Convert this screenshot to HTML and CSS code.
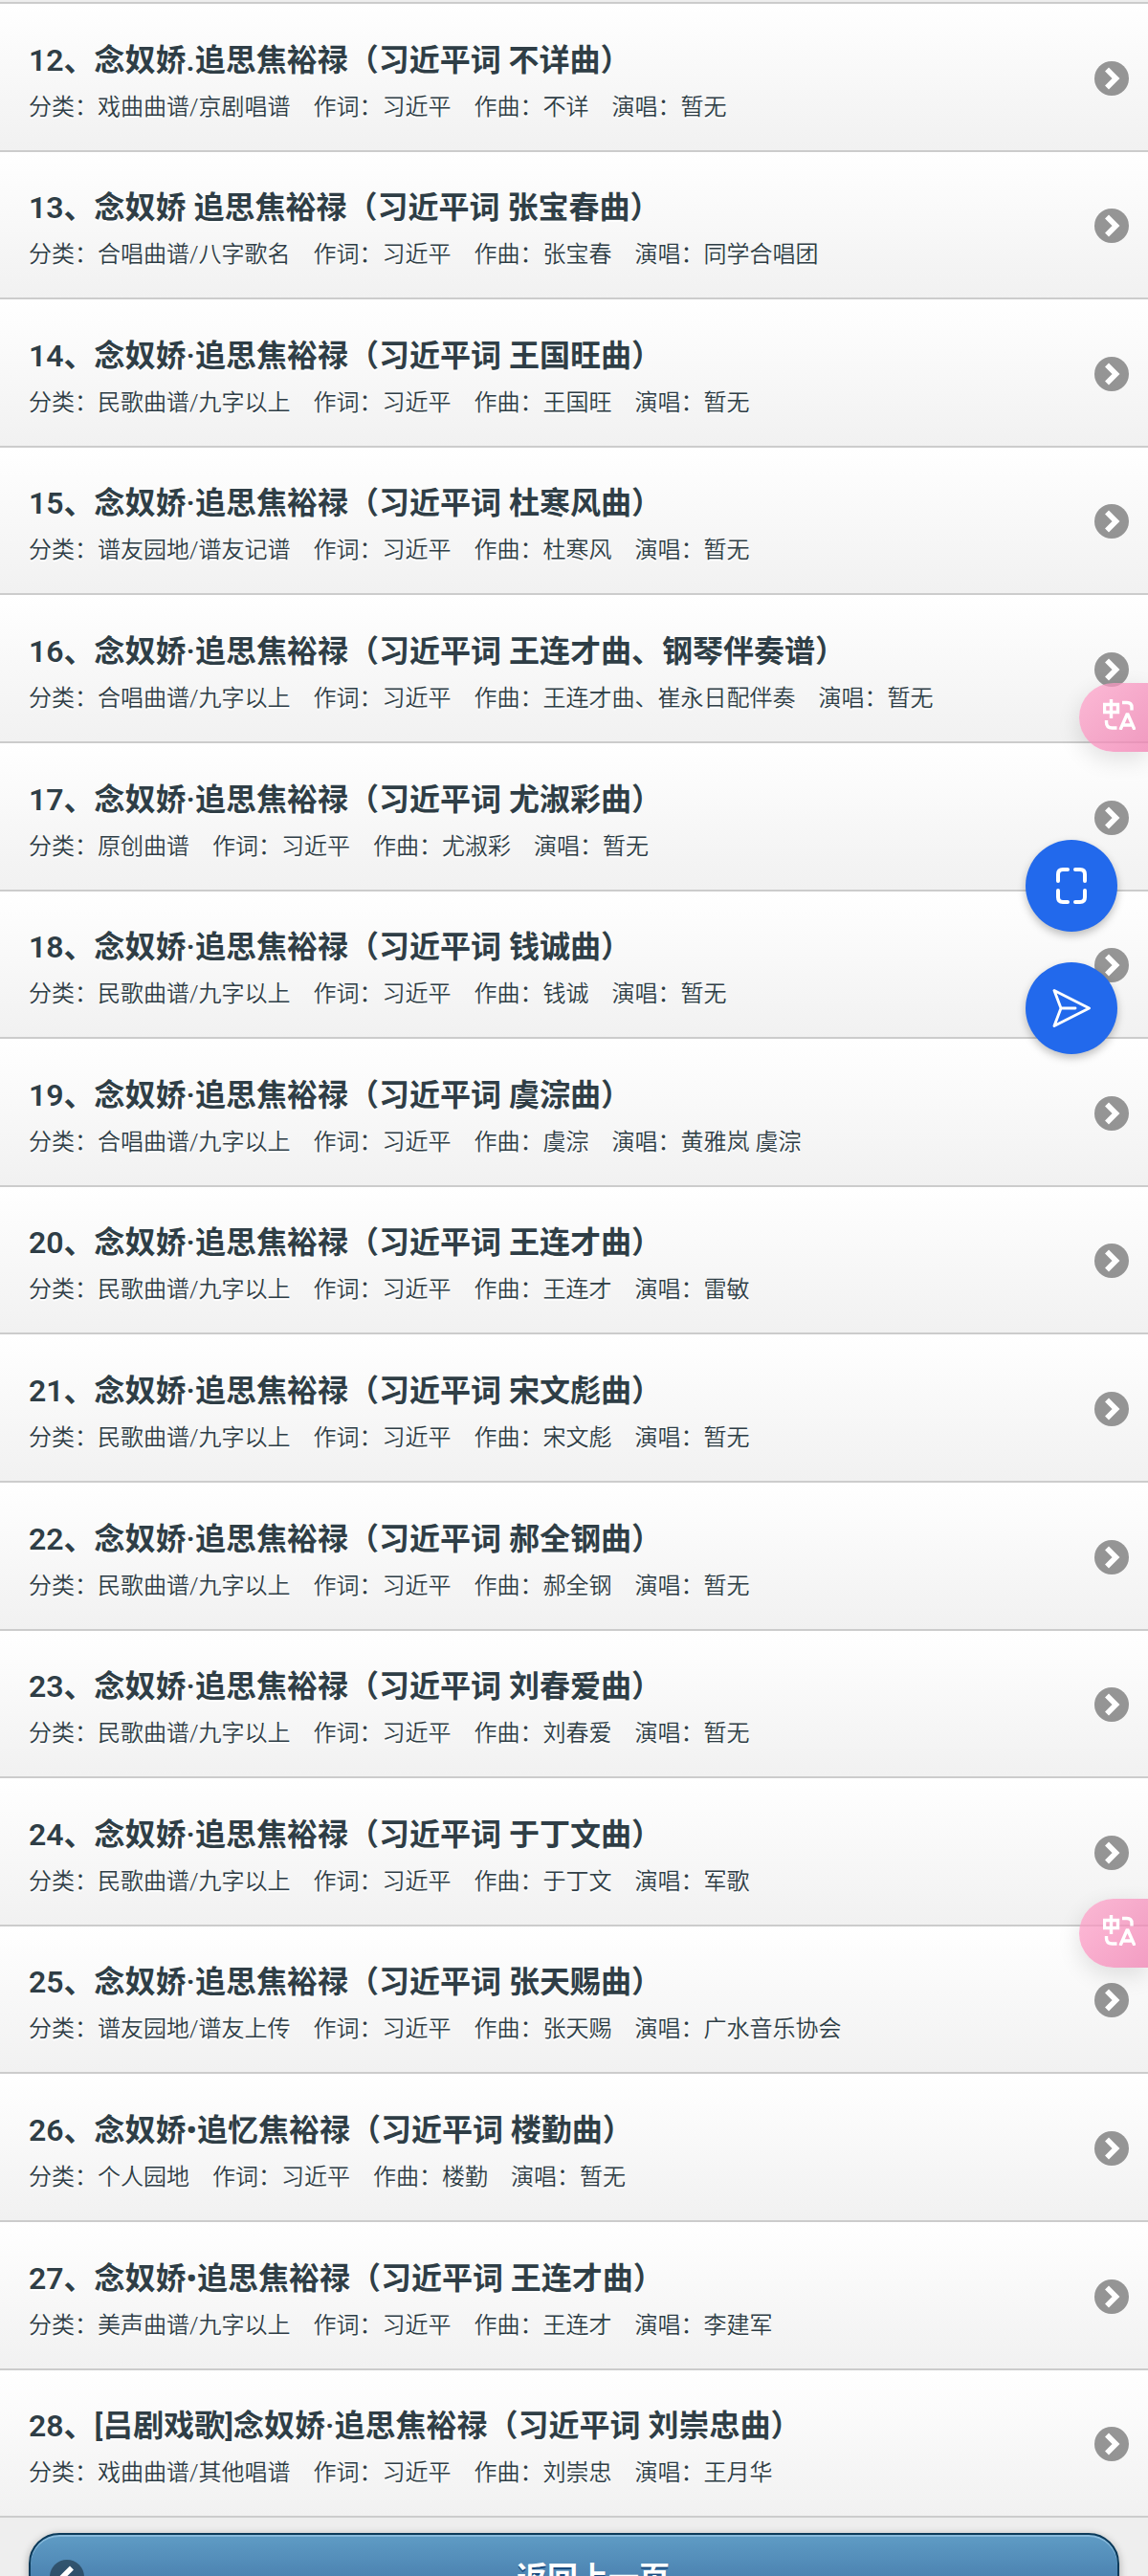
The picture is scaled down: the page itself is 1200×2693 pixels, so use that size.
FILE: index.html
```html
<!DOCTYPE html>
<html lang="zh-CN">
<head>
  <meta charset="utf-8">
  <title>曲谱列表</title>
  <link rel="stylesheet" href="styles.css">
</head>
<body>
  <svg class="symbols">
    <symbol id="arrow" viewBox="0 0 36 36">
      <circle cx="18" cy="18" r="18" fill="#000" fill-opacity=".4"/>
      <path d="M15 10.5l7.5 7.5-7.5 7.5" fill="none" stroke="#fff" stroke-width="5.6" stroke-linecap="square" stroke-linejoin="miter"/>
    </symbol>
    <symbol id="translate" viewBox="0 0 34 32">
      <g fill="none" stroke="#fff" stroke-width="3.4">
        <path d="M1.5 5.5h14v8h-14zM8.5 0v20M20 3.5h5q5 0 5 5v3M3.5 22v2q0 6 6 6h5"/>
        <path d="M18 32l7-16h1l7 16M20.5 27h10"/>
      </g>
    </symbol>
  </svg>

  <ul class="list">
    <li><a href="#"><h2>12、念奴娇.追思焦裕禄（习近平词 不详曲）</h2><p>分类：戏曲曲谱/京剧唱谱　作词：习近平　作曲：不详　演唱：暂无</p></a><svg class="arrow"><use href="#arrow"/></svg></li>
    <li><a href="#"><h2>13、念奴娇 追思焦裕禄（习近平词 张宝春曲）</h2><p>分类：合唱曲谱/八字歌名　作词：习近平　作曲：张宝春　演唱：同学合唱团</p></a><svg class="arrow"><use href="#arrow"/></svg></li>
    <li><a href="#"><h2>14、念奴娇·追思焦裕禄（习近平词 王国旺曲）</h2><p>分类：民歌曲谱/九字以上　作词：习近平　作曲：王国旺　演唱：暂无</p></a><svg class="arrow"><use href="#arrow"/></svg></li>
    <li><a href="#"><h2>15、念奴娇·追思焦裕禄（习近平词 杜寒风曲）</h2><p>分类：谱友园地/谱友记谱　作词：习近平　作曲：杜寒风　演唱：暂无</p></a><svg class="arrow"><use href="#arrow"/></svg></li>
    <li><a href="#"><h2>16、念奴娇·追思焦裕禄（习近平词 王连才曲、钢琴伴奏谱）</h2><p>分类：合唱曲谱/九字以上　作词：习近平　作曲：王连才曲、崔永日配伴奏　演唱：暂无</p></a><svg class="arrow"><use href="#arrow"/></svg></li>
    <li><a href="#"><h2>17、念奴娇·追思焦裕禄（习近平词 尤淑彩曲）</h2><p>分类：原创曲谱　作词：习近平　作曲：尤淑彩　演唱：暂无</p></a><svg class="arrow"><use href="#arrow"/></svg></li>
    <li><a href="#"><h2>18、念奴娇·追思焦裕禄（习近平词 钱诚曲）</h2><p>分类：民歌曲谱/九字以上　作词：习近平　作曲：钱诚　演唱：暂无</p></a><svg class="arrow"><use href="#arrow"/></svg></li>
    <li><a href="#"><h2>19、念奴娇·追思焦裕禄（习近平词 虞淙曲）</h2><p>分类：合唱曲谱/九字以上　作词：习近平　作曲：虞淙　演唱：黄雅岚 虞淙</p></a><svg class="arrow"><use href="#arrow"/></svg></li>
    <li><a href="#"><h2>20、念奴娇·追思焦裕禄（习近平词 王连才曲）</h2><p>分类：民歌曲谱/九字以上　作词：习近平　作曲：王连才　演唱：雷敏</p></a><svg class="arrow"><use href="#arrow"/></svg></li>
    <li><a href="#"><h2>21、念奴娇·追思焦裕禄（习近平词 宋文彪曲）</h2><p>分类：民歌曲谱/九字以上　作词：习近平　作曲：宋文彪　演唱：暂无</p></a><svg class="arrow"><use href="#arrow"/></svg></li>
    <li><a href="#"><h2>22、念奴娇·追思焦裕禄（习近平词 郝全钢曲）</h2><p>分类：民歌曲谱/九字以上　作词：习近平　作曲：郝全钢　演唱：暂无</p></a><svg class="arrow"><use href="#arrow"/></svg></li>
    <li><a href="#"><h2>23、念奴娇·追思焦裕禄（习近平词 刘春爱曲）</h2><p>分类：民歌曲谱/九字以上　作词：习近平　作曲：刘春爱　演唱：暂无</p></a><svg class="arrow"><use href="#arrow"/></svg></li>
    <li><a href="#"><h2>24、念奴娇·追思焦裕禄（习近平词 于丁文曲）</h2><p>分类：民歌曲谱/九字以上　作词：习近平　作曲：于丁文　演唱：军歌</p></a><svg class="arrow"><use href="#arrow"/></svg></li>
    <li><a href="#"><h2>25、念奴娇·追思焦裕禄（习近平词 张天赐曲）</h2><p>分类：谱友园地/谱友上传　作词：习近平　作曲：张天赐　演唱：广水音乐协会</p></a><svg class="arrow"><use href="#arrow"/></svg></li>
    <li><a href="#"><h2>26、念奴娇•追忆焦裕禄（习近平词 楼勤曲）</h2><p>分类：个人园地　作词：习近平　作曲：楼勤　演唱：暂无</p></a><svg class="arrow"><use href="#arrow"/></svg></li>
    <li><a href="#"><h2>27、念奴娇•追思焦裕禄（习近平词 王连才曲）</h2><p>分类：美声曲谱/九字以上　作词：习近平　作曲：王连才　演唱：李建军</p></a><svg class="arrow"><use href="#arrow"/></svg></li>
    <li><a href="#"><h2>28、[吕剧戏歌]念奴娇·追思焦裕禄（习近平词 刘崇忠曲）</h2><p>分类：戏曲曲谱/其他唱谱　作词：习近平　作曲：刘崇忠　演唱：王月华</p></a><svg class="arrow"><use href="#arrow"/></svg></li>
  </ul>

  <a class="back" href="#">
    <svg class="back-icon" viewBox="0 0 36 36">
      <circle cx="18" cy="18" r="18" fill="#000" fill-opacity=".4"/>
      <path d="M21 10.5l-7.5 7.5 7.5 7.5" fill="none" stroke="#fff" stroke-width="5.6" stroke-linecap="square"/>
    </svg>
    <span>返回上一页</span>
  </a>

  <!-- floating buttons -->
  <div class="translate translate-top"><svg><use href="#translate"/></svg></div>
  <div class="translate translate-bottom"><svg><use href="#translate"/></svg></div>
  <div class="fab fab-scan">
    <svg width="40" height="40" viewBox="0 0 40 40" fill="none" stroke="#fff" stroke-width="4" stroke-linecap="round">
      <path d="M6 15V8q0-5 5-5h5M24 3h5q5 0 5 5v7M34 25v7q0 5-5 5h-5M16 37h-5q-5 0-5-5v-7"/>
    </svg>
  </div>
  <div class="fab fab-send">
    <svg width="40" height="40" viewBox="0 0 40 40" fill="none" stroke="#fff" stroke-width="2.9" stroke-linecap="round" stroke-linejoin="round">
      <path d="M2 1.5L38.5 20 2 38.5 9 20zM9 20h15"/>
    </svg>
  </div>
</body>
</html>
```
FILE: styles.css
```css
body {
  margin: 0;
  height: 2693px;
  overflow: hidden;
  position: relative;
  background: #eee;
  font-family: Roboto, "Noto Sans CJK SC", sans-serif;
  color: #2f3e46;
}
a {
  color: inherit;
  text-decoration: none;
}
.symbols {
  display: none;
}
.list {
  list-style: none;
  margin: 0;
  padding: 2px 0 0;
}
.list li {
  display: flex;
  align-items: center;
  justify-content: space-between;
  box-sizing: border-box;
  height: 154.6px;
  padding: 2.6px 20px 0 30px;
  border-top: 2px solid #ccc;
  background: linear-gradient(#fff, #f1f1f1);
  text-shadow: 0 2px 0 #fff;
}
.list li:last-child {
  height: 156.6px;
  border-bottom: 2px solid #ccc;
}
.list h2 {
  margin: 0;
  padding-top: 8px;
  font-size: 32px;
  line-height: 46px;
  font-weight: 600;
}
.list p {
  margin: 6px 0 0;
  font-size: 24px;
  line-height: 40px;
  font-weight: 350;
}
.arrow {
  width: 36px;
  height: 36px;
}
.back {
  display: flex;
  align-items: center;
  justify-content: center;
  box-sizing: border-box;
  height: 92px;
  margin: 16px 30px 0;
  padding-left: 40px;
  position: relative;
  border: 2px solid #0b3a5a;
  border-radius: 32px;
  background: linear-gradient(#5f9cc5, #396b9e);
  box-shadow: inset 0 2px 0 #87b9db, 0 2px 8px rgba(0, 0, 0, .3);
  color: #fff;
  font-size: 32px;
  font-weight: 600;
  text-shadow: 0 2px 0 #194b7e;
}
.back span {
  padding-bottom: 5px;
}
.back-icon {
  position: absolute;
  left: 20px;
  width: 36px;
  height: 36px;
}
.translate {
  position: absolute;
  right: 0;
  width: 72px;
  height: 72px;
  box-sizing: border-box;
  padding: 17px 0 0 25px;
  border-radius: 36px 0 0 36px;
  background: linear-gradient(135deg, rgba(255, 160, 200, .7), rgba(239, 125, 175, .75));
  box-shadow: 0 8px 24px rgba(0, 0, 0, .12);
}
.translate svg {
  display: block;
  width: 34px;
  height: 32px;
}
.translate-top {
  top: 714px;
}
.translate-bottom {
  top: 1985px;
}
.fab {
  position: absolute;
  left: 1072px;
  display: flex;
  align-items: center;
  justify-content: center;
  width: 96px;
  height: 96px;
  border-radius: 50%;
  background: #2269ec;
  box-shadow: 0 4px 8px rgba(0, 0, 0, .25);
}
.fab-scan {
  top: 878px;
}
.fab-send {
  top: 1006px;
}
```
